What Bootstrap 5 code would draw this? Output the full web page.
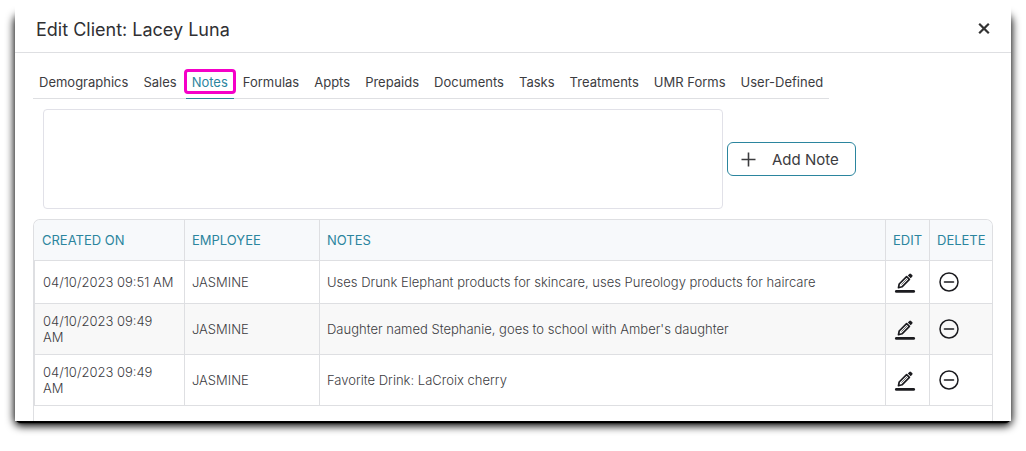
<!DOCTYPE html>
<html lang="en">
<head>
<meta charset="utf-8">
<meta name="viewport" content="width=device-width, initial-scale=1">
<title>Edit Client: Lacey Luna</title>
<link rel="stylesheet" href="https://cdn.jsdelivr.net/npm/bootstrap@5.3.0/dist/css/bootstrap.min.css">
<style>
  :root { --teal: #2b859e; --line: #dedfe2; --ink: #3c3c3f; }
  body { font-family: Inter, "Liberation Sans", sans-serif; font-size: 13px; color: var(--ink); background: #fff; padding: 0 15px 30px; overflow-x: hidden; }
  .client-dialog { position: relative; }
  .client-dialog::before { content: ""; position: absolute; inset: 14px 0 -2px; border-radius: 6px; background: #000; box-shadow: 0 2px 9px 1px #000, 0 2px 2px -2px #000; }
  .dialog-wrap { background: #fff; position: relative; }
  .dialog-head { border-bottom: 1px solid var(--line); padding: 16px 18px 9px 21px; }
  .dialog-title { font-size: 18px; line-height: 27px; font-weight: 400; color: #303033; }
  .close-btn { width: 18px; height: 18px; line-height: 0; color: #333; }
  .dialog-body { padding: 16px 18px 0; }
  .client-tabs { display: inline-flex; flex-wrap: nowrap; column-gap: 3px; border-bottom: 1px solid var(--line); }
  .client-tabs .nav-link { color: var(--ink); padding: 3px 6px 6px; margin-bottom: -1px; line-height: 20px; border-bottom: 1px solid transparent; white-space: nowrap; border-radius: 0; }
  .client-tabs .nav-link.active { color: var(--teal); border-bottom-color: var(--teal); }
  .tab-marker { position: absolute; inset: 0 -2px 4px; border: 3px solid #f500c8; border-radius: 4px; pointer-events: none; }
  .note-row { padding: 10px 0 10px 10px; gap: 4px; }
  .note-box { flex: 0 1 680px; min-width: 0; height: 100px; border: 1px solid #e1e1e8; border-radius: 4px; resize: none; padding: 8px; }
  .add-btn { border: 1px solid var(--teal); border-radius: 6px; height: 34px; padding: 1px 16px 0 13px; font-size: 15px; line-height: 22px; gap: 16px; color: var(--ink); white-space: nowrap; }
  .add-btn:hover { border-color: var(--teal); background: #f1f8fa; }
  .notes-grid { border: 1px solid var(--line); border-bottom: 0; border-radius: 7px 7px 0 0; overflow: hidden; padding-bottom: 15px; }
  .notes-table { table-layout: fixed; width: 100%; margin: 0; color: var(--ink); border-collapse: separate; border-spacing: 0; }
  .notes-table th, .notes-table td { border-right: 1px solid var(--line); border-bottom: 1px solid var(--line); padding: 0 7px; font-weight: 300; line-height: 16px; vertical-align: middle; }
  .notes-table th { background: #f7f9fb; color: var(--teal); font-weight: 400; height: 41px; }
  .notes-table th:last-child, .notes-table td:last-child { border-right: 0; }
  .notes-table td { height: 43px; padding: 9px 7px; }
  .notes-table th:first-child { padding-left: 8px; }
  .notes-table td:first-child { padding-left: 8px; padding-right: 9px; border-left: 1px solid var(--line); }
  .notes-table tbody tr:nth-child(even) td { background: #f8f8f8; }
  .notes-table td.tool-cell { padding-top: 0; padding-bottom: 0; }
  .col-created { width: 151px; } .col-employee { width: 135px; } .col-edit { width: 44px; } .col-delete { width: 62px; }
  .icon-btn { display: block; padding: 0; border: 0; background: none; line-height: 0; margin-left: 1px; color: #1b1b1f; }
</style>
</head>
<body>
<svg class="d-none">
  <symbol id="pencil" viewBox="0 0 22 22">
    <path d="M5.2 13 12.6 5.6l2.8 2.8L8 15.8l-3.5.9z" fill="none" stroke="currentColor" stroke-width="1.7" stroke-linejoin="round"/>
    <path d="M7.4 13.6l5.6-5.6" stroke="currentColor" stroke-width=".6"/>
    <path d="M13.8 4.4l1.5-1.5a1.2 1.2 0 0 1 1.7 0l1.2 1.2a1.2 1.2 0 0 1 0 1.7l-1.5 1.5z" fill="currentColor"/>
    <path d="M2.3 20.4h17.4" stroke="currentColor" stroke-width="2.7" stroke-linecap="round"/>
  </symbol>
  <symbol id="minus" viewBox="0 0 22 22">
    <circle cx="11" cy="11" r="9" fill="none" stroke="currentColor" stroke-width="1.5"/>
    <path d="M6.5 11h9" stroke="currentColor" stroke-width="1.6" stroke-linecap="round"/>
  </symbol>
</svg>
<main class="client-dialog">
  <div class="dialog-wrap">
    <header class="dialog-head d-flex align-items-center justify-content-between">
      <h1 class="dialog-title m-0">Edit Client: Lacey Luna</h1>
      <button type="button" class="close-btn btn p-0 border-0" aria-label="Close">
        <svg width="18" height="18" viewBox="0 0 18 18"><path d="M4.2 2.7l9.6 9.6M13.8 2.7l-9.6 9.6" stroke="currentColor" stroke-width="2.2"/></svg>
      </button>
    </header>
    <div class="dialog-body">
      <nav class="nav client-tabs">
        <a class="nav-link" href="#">Demographics</a>
        <a class="nav-link" href="#">Sales</a>
        <a class="nav-link active position-relative" href="#" aria-current="page">Notes<span class="tab-marker"></span></a>
        <a class="nav-link" href="#">Formulas</a>
        <a class="nav-link" href="#">Appts</a>
        <a class="nav-link" href="#">Prepaids</a>
        <a class="nav-link" href="#">Documents</a>
        <a class="nav-link" href="#">Tasks</a>
        <a class="nav-link" href="#">Treatments</a>
        <a class="nav-link" href="#">UMR Forms</a>
        <a class="nav-link" href="#">User-Defined</a>
      </nav>
      <div class="note-row d-flex align-items-center">
        <textarea class="note-box" aria-label="New note"></textarea>
        <button type="button" class="add-btn btn d-flex align-items-center">
          <svg width="15" height="15" viewBox="0 0 15 15"><path d="M7.5 .5v14M.5 7.5h14" stroke="currentColor" stroke-width="1.6"/></svg>
          Add Note
        </button>
      </div>
      <div class="notes-grid">
        <table class="notes-table">
          <colgroup><col class="col-created"><col class="col-employee"><col><col class="col-edit"><col class="col-delete"></colgroup>
          <thead>
            <tr><th scope="col">CREATED ON</th><th scope="col">EMPLOYEE</th><th scope="col">NOTES</th><th scope="col">EDIT</th><th scope="col" class="pe-0">DELETE</th></tr>
          </thead>
          <tbody>
            <tr><td>04/10/2023 09:51 AM</td><td>JASMINE</td><td>Uses Drunk Elephant products for skincare, uses Pureology products for haircare</td>
              <td class="tool-cell"><button type="button" class="icon-btn" aria-label="Edit"><svg width="22" height="22"><use href="#pencil"/></svg></button></td>
              <td class="tool-cell"><button type="button" class="icon-btn" aria-label="Delete"><svg width="22" height="22"><use href="#minus"/></svg></button></td></tr>
            <tr><td>04/10/2023 09:49 AM</td><td>JASMINE</td><td>Daughter named Stephanie, goes to school with Amber's daughter</td>
              <td class="tool-cell"><button type="button" class="icon-btn" aria-label="Edit"><svg width="22" height="22"><use href="#pencil"/></svg></button></td>
              <td class="tool-cell"><button type="button" class="icon-btn" aria-label="Delete"><svg width="22" height="22"><use href="#minus"/></svg></button></td></tr>
            <tr><td>04/10/2023 09:49 AM</td><td>JASMINE</td><td>Favorite Drink: LaCroix cherry</td>
              <td class="tool-cell"><button type="button" class="icon-btn" aria-label="Edit"><svg width="22" height="22"><use href="#pencil"/></svg></button></td>
              <td class="tool-cell"><button type="button" class="icon-btn" aria-label="Delete"><svg width="22" height="22"><use href="#minus"/></svg></button></td></tr>
          </tbody>
        </table>
      </div>
    </div>
  </div>
</main>
<script src="https://cdn.jsdelivr.net/npm/bootstrap@5.3.0/dist/js/bootstrap.bundle.min.js"></script>
</body>
</html>
